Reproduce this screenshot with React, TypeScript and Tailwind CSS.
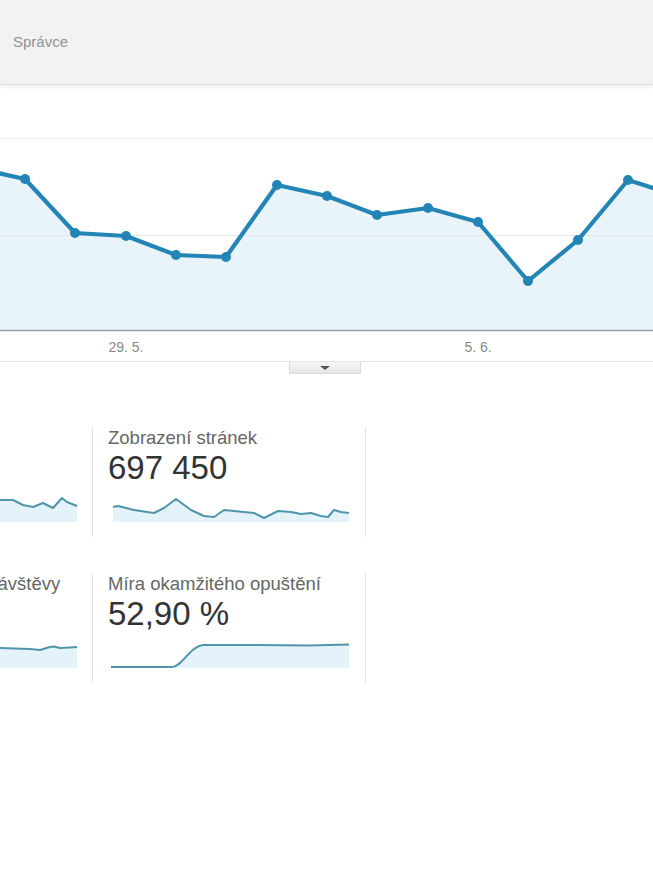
import React from "react";

type Pt = [number, number];

// main chart points, in page coordinates
const chartPts: Pt[] = [
  [-25, 168],
  [25, 179],
  [75, 233],
  [126, 236],
  [176, 255],
  [226, 257],
  [277, 185],
  [327, 196],
  [377, 215],
  [428, 208],
  [478, 222],
  [528, 281],
  [578, 240],
  [628, 180],
  [678, 196],
];

const toLine = (pts: Pt[]) => pts.map(([x, y]) => `${x},${y}`).join(" L");

const MainChart = () => {
  const axis = 330;
  const line = "M" + toLine(chartPts);
  const area = `M${chartPts[0][0]},${axis} L${toLine(chartPts)} L${chartPts[chartPts.length - 1][0]},${axis} Z`;
  return (
    <svg width={653} height={276} viewBox="0 85 653 276" className="block">
      <path d={area} fill="#e8f4fa" />
      <line x1={0} x2={653} y1={138.5} y2={138.5} stroke="#eeeeee" strokeWidth={1} />
      <line x1={0} x2={653} y1={235.5} y2={235.5} stroke="#e6e6e6" strokeWidth={1} />
      <line x1={0} x2={653} y1={330.5} y2={330.5} stroke="#9aa3a6" strokeWidth={1.6} />
      <path d={line} fill="none" stroke="#2384b6" strokeWidth={4.2} strokeLinejoin="round" />
      {chartPts.map(([x, y]) => (
        <circle key={x} cx={x} cy={y} r={5} fill="#2384b6" />
      ))}
      <text x={126} y={352} textAnchor="middle" fontSize={14} fill="#8a8a8a" fontFamily="'Liberation Sans', Arial, sans-serif">
        29. 5.
      </text>
      <text x={478} y={352} textAnchor="middle" fontSize={14} fill="#8a8a8a" fontFamily="'Liberation Sans', Arial, sans-serif">
        5. 6.
      </text>
    </svg>
  );
};

const Sparkline = ({ pts, d }: { pts?: Pt[]; d?: string }) => {
  const lineD = d ?? "M" + toLine(pts!);
  const first = pts ? pts[0][0] : 3;
  const last = pts ? pts[pts.length - 1][0] : 241;
  const areaD = `${lineD} L${last},30 L${first},30 Z`;
  return (
    <svg width={243} height={30} viewBox="0 0 243 30" className="block mt-[5px]">
      <path d={areaD} fill="#e4f2f9" />
      <path d={lineD} fill="none" stroke="#5095ab" strokeWidth={2} strokeLinejoin="round" />
    </svg>
  );
};

interface Metric {
  label?: string;
  value?: string;
  pts?: Pt[];
  d?: string;
}

// the first column lies mostly off the left edge; only its visible parts carry text
const rows: Metric[][] = [
  [
    {
      pts: [
        [0, 12], [10, 10], [25, 14], [40, 9], [55, 12], [70, 11], [85, 15], [100, 12],
        [115, 7], [130, 10], [145, 13], [155, 9], [165, 8], [178, 8], [188, 13], [198, 15],
        [208, 11], [218, 16], [227, 6], [232, 10], [242, 14],
      ],
    },
    {
      label: "Zobrazení stránek",
      value: "697 450",
      pts: [
        [5, 15], [10, 14], [26, 18], [46, 21], [56, 16], [68, 7], [83, 18], [96, 24],
        [106, 25], [116, 18], [136, 20], [146, 21], [156, 26], [170, 19], [183, 20],
        [193, 22], [203, 21], [213, 24], [220, 25], [226, 18], [233, 20], [241, 21],
      ],
    },
  ],
  [
    {
      label: "Prům. doba trvání návštěvy",
      pts: [
        [0, 11], [20, 10], [40, 12], [60, 10], [80, 11], [100, 9], [120, 11], [140, 10],
        [165, 10], [180, 10.5], [195, 11], [205, 12], [215, 9], [219, 8.5], [225, 10],
        [235, 9.5], [242, 9],
      ],
    },
    {
      label: "Míra okamžitého opuštění",
      value: "52,90 %",
      d: "M3,29 L64,29 C74,29 82,8 95,7 L150,7 L200,7.5 L241,6.5",
    },
  ],
];

const MetricCard = ({ m }: { m: Metric }) => (
  <div className="w-[273px] h-[110px] shrink-0 border-l border-[#e3e3e3] pl-[15px] pr-[15px]">
    <div className="h-[22px] text-[18.5px] leading-[22px] text-[#666666] whitespace-nowrap">{m.label}</div>
    <div className="h-[38px] text-[33px] leading-[38px] text-[#333333] whitespace-nowrap">{m.value}</div>
    <Sparkline pts={m.pts} d={m.d} />
  </div>
);

export default function App() {
  return (
    <div className="w-[653px] h-[870px] bg-white overflow-hidden font-['Liberation_Sans',Arial,sans-serif]">
      {/* header */}
      <div className="h-[85px] bg-[#f2f2f2] border-b border-[#dedede] shadow-[0_2px_4px_rgba(0,0,0,0.07)] flex items-center px-[13px] relative">
        <span className="text-[15px] text-[#939393]">Správce</span>
      </div>

      <MainChart />

      {/* collapse tab */}
      <div className="border-t border-[#e4e4e4]">
        <div className="ml-[289px] w-[72px] h-[12px] bg-gradient-to-b from-[#f6f6f6] to-[#e6e6e6] border border-t-0 border-[#dcdcdc] flex items-center justify-center">
          <div className="w-0 h-0 border-l-[5px] border-r-[5px] border-t-[4px] border-l-transparent border-r-transparent border-t-[#555555]" />
        </div>
      </div>

      {/* metric cards */}
      <div className="mt-[53px] ml-[-181px] flex flex-col gap-[36px]">
        {rows.map((row, i) => (
          <div key={i} className="flex">
            {row.map((m, j) => (
              <MetricCard key={j} m={m} />
            ))}
            <div className="h-[110px] border-l border-[#e3e3e3]" />
          </div>
        ))}
      </div>
    </div>
  );
}
